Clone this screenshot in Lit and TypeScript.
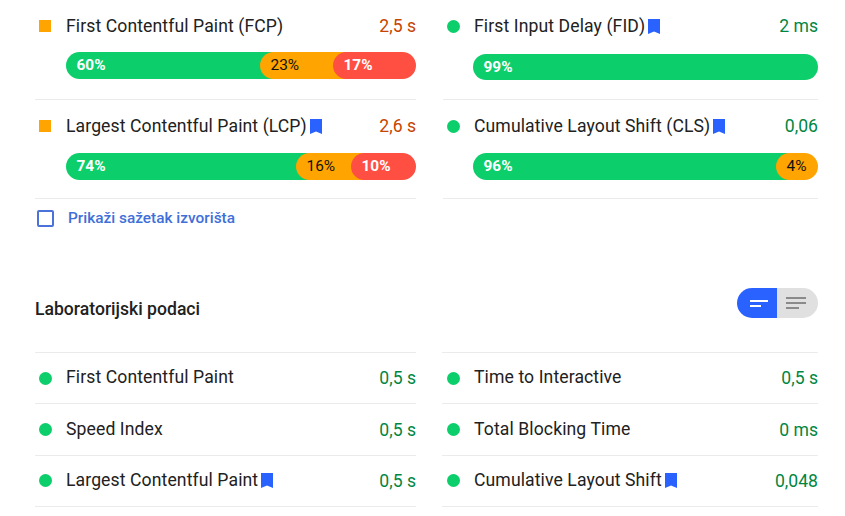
import { LitElement, html, css, nothing } from "lit";
import { customElement } from "lit/decorators.js";

type Seg = { t: "g" | "o" | "r"; label: string; w: number };
type Field = { icon: "sq" | "dot"; name: string; mark?: boolean; val: string; tone: "warn" | "ok"; segs: Seg[]; cls: string };

const left: Field[] = [
  { icon: "sq", name: "First Contentful Paint (FCP)", val: "2,5 s", tone: "warn", cls: "a",
    segs: [{ t: "g", label: "60%", w: 222 }, { t: "o", label: "23%", w: 101 }, { t: "r", label: "17%", w: 83 }] },
  { icon: "sq", name: "Largest Contentful Paint (LCP)", mark: true, val: "2,6 s", tone: "warn", cls: "b",
    segs: [{ t: "g", label: "74%", w: 258 }, { t: "o", label: "16%", w: 83 }, { t: "r", label: "10%", w: 65 }] },
];
const right: Field[] = [
  { icon: "dot", name: "First Input Delay (FID)", mark: true, val: "2 ms", tone: "ok", cls: "c",
    segs: [{ t: "g", label: "99%", w: 345 }] },
  { icon: "dot", name: "Cumulative Layout Shift (CLS)", mark: true, val: "0,06", tone: "ok", cls: "b",
    segs: [{ t: "g", label: "96%", w: 331 }, { t: "o", label: "4%", w: 42 }] },
];
const labL = [
  { name: "First Contentful Paint", val: "0,5 s" },
  { name: "Speed Index", val: "0,5 s" },
  { name: "Largest Contentful Paint", val: "0,5 s", mark: true },
];
const labR = [
  { name: "Time to Interactive", val: "0,5 s" },
  { name: "Total Blocking Time", val: "0 ms" },
  { name: "Cumulative Layout Shift", val: "0,048", mark: true },
];

const bookmark = html`<svg class="mark" width="12" height="15" viewBox="0 0 12 15"><path d="M0 0h12v15l-6-2.4L0 15z" fill="#2962ff"/></svg>`;

@customElement("app-root")
export class AppRoot extends LitElement {
  static styles = css`
    :host { display: block; width: 845px; height: 516px; overflow: hidden; background: #fff;
      font-family: Roboto, "Liberation Sans", sans-serif; color: #212121; }
    .page { padding: 0 27px 0 35px; }
    .fields { display: grid; grid-template-columns: 381px 375px; column-gap: 27px; }
    .lab { display: grid; grid-template-columns: 381px 376px; column-gap: 26px; border: 0; margin-top: -1px; }
    .col { display: flex; flex-direction: column; }
    .field { border-bottom: 1px solid #ebebeb; height: 99px; box-sizing: border-box; }
    .field.a, .field.c { height: 100px; }
    .head { display: flex; align-items: center; height: 24px; padding-top: 14px; font-size: 17.6px; line-height: 24px; }
    .name { letter-spacing: 0.1px; }
    .ico { flex: 0 0 auto; background: #ffa400; }
    .ico.sq { width: 12px; height: 12px; margin: 0 15px 0 4px; }
    .ico.dot { width: 13px; height: 13px; border-radius: 50%; background: #0cce6b; margin: 0 14px 0 4px; }
    .mark { margin-left: 3px; flex: 0 0 auto; }
    .val { margin-left: auto; font-size: 17.6px; }
    .val.warn { color: #c64500; }
    .val.ok { color: #018642; }
    .bar { display: flex; margin: 15px 0 0 31px; height: 27px; }
    .right .bar { margin-left: 30px; }
    .a .bar { margin-top: 14px; }
    .c .bar { margin-top: 16px; height: 26px; }
    .seg { box-sizing: border-box; border-radius: 14px; padding-left: 10.5px; font-size: 15.4px; line-height: 26px; flex: 0 0 auto; }
    .seg + .seg { margin-left: -28px; }
    .seg.g { background: #0cce6b; color: #fff; font-weight: 700; }
    .seg.o { background: #ffa400; color: #111; }
    .seg.r { background: #ff4e42; color: #fff; font-weight: 700; }
    .check { display: flex; align-items: center; height: 38px; padding-left: 2px; }
    .box { width: 13px; height: 13px; border: 2px solid #4a72d8; border-radius: 2px; margin-right: 14px; }
    .link { font-size: 15.4px; font-weight: 500; color: #3f6fd8; }
    .title { display: flex; align-items: flex-start; justify-content: space-between; margin-top: 52px; height: 64px; }
    .title h2 { margin: 8px 0 0; font-size: 17.6px; font-weight: 500; line-height: 24px; }
    .toggle { display: flex; width: 81px; height: 30px; border-radius: 15px; overflow: hidden; margin-top: -1px; }
    .toggle div { display: flex; flex-direction: column; justify-content: center; gap: 3px; }
    .t1 { width: 40px; background: #2962ff; padding-left: 13px; box-sizing: border-box; }
    .t2 { flex: 1; background: #e0e0e0; padding-left: 9px; }
    .t1 span { display: block; height: 2px; background: #fff; }
    .t2 span { display: block; height: 2px; background: #8a8a8a; }
    .lab .col { border-top: 1px solid #ebebeb; }
    .lrow { display: flex; align-items: center; height: 51.4px; box-sizing: border-box; border-bottom: 1px solid #ebebeb; font-size: 17.6px; }
    .lrow .name { margin-bottom: 2px; }
    .lab .right .lrow { padding-left: 1px; }
    .lrow .ico.dot { margin-right: 14px; }
    .lrow .val { color: #018642; }
  `;

  private field(f: Field) {
    return html`<div class="field ${f.cls}">
      <div class="head">
        <span class="ico ${f.icon}"></span>
        <span class="name">${f.name}</span>
        ${f.mark ? bookmark : nothing}
        <span class="val ${f.tone}">${f.val}</span>
      </div>
      <div class="bar">
        ${f.segs.map((s) => html`<div class="seg ${s.t}" style="width:${s.w}px">${s.label}</div>`)}
      </div>
    </div>`;
  }

  private lrow(r: { name: string; val: string; mark?: boolean }) {
    return html`<div class="lrow">
      <span class="ico dot"></span>
      <span class="name">${r.name}</span>
      ${r.mark ? bookmark : nothing}
      <span class="val">${r.val}</span>
    </div>`;
  }

  render() {
    return html`<div class="page">
      <div class="fields">
        <div class="col">
          ${left.map((f) => this.field(f))}
          <div class="check"><span class="box"></span><span class="link">Prikaži sažetak izvorišta</span></div>
        </div>
        <div class="col right">${right.map((f) => this.field(f))}</div>
      </div>
      <div class="title">
        <h2>Laboratorijski podaci</h2>
        <div class="toggle">
          <div class="t1"><span style="width:18px"></span><span style="width:11px"></span></div>
          <div class="t2"><span style="width:20px"></span><span style="width:20px"></span><span style="width:13px"></span></div>
        </div>
      </div>
      <div class="lab">
        <div class="col">${labL.map((r) => this.lrow(r))}</div>
        <div class="col right">${labR.map((r) => this.lrow(r))}</div>
      </div>
    </div>`;
  }
}
